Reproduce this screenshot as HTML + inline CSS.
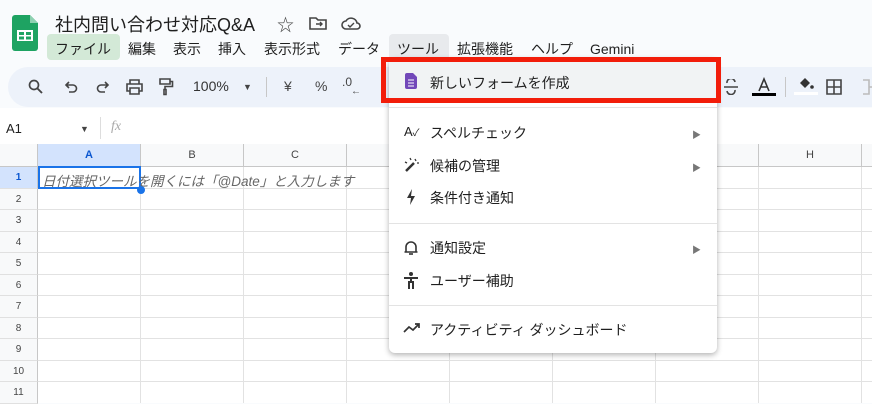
<!DOCTYPE html>
<html><head><meta charset="utf-8"><style>
*{box-sizing:border-box;margin:0;padding:0}
body{width:872px;height:403px;overflow:hidden;background:#f9fbfd;font-family:"Liberation Sans","Noto Sans CJK JP",sans-serif;color:#1f1f1f;position:relative}
.abs{position:absolute}
.menu span{position:absolute;top:38px;font-size:14px;height:22px;line-height:22px}
.tb{position:absolute;top:67px;left:8px;width:900px;height:40px;background:#edf2fa;border-radius:20px}
.tb span{position:absolute;top:11px;font-size:14px;color:#444}
.grid{position:absolute;top:144px;left:0;width:872px;height:259px;background:#fff}
.ch{position:absolute;top:0;height:23px;border-right:1px solid #c7c7c7;border-bottom:1px solid #c7c7c7;background:#f8f9fa;font-size:11px;color:#444;text-align:center;line-height:23px}
.rh{position:absolute;left:0;width:38px;border-right:1px solid #c7c7c7;border-bottom:1px solid #e0e0e0;background:#f8f9fa;font-size:10px;color:#444;text-align:center}
.hl{position:absolute;left:38px;width:834px;height:1px;background:#e2e2e2}
.vl{position:absolute;top:23px;width:1px;height:236px;background:#e2e2e2}
.dd{position:absolute;left:389px;top:58px;width:328px;height:295px;background:#fff;border-radius:6px;box-shadow:0 2px 6px rgba(0,0,0,.3)}
.it{position:absolute;left:430px;font-size:14px;color:#1f1f1f}
.sep{position:absolute;left:389px;width:328px;height:1px;background:#e3e3e3}
.arr{position:absolute;left:692px;font-size:9px;color:#777}
</style></head><body>
<svg class="abs" style="left:12px;top:15px" width="26" height="36" viewBox="0 0 26 36"><path d="M0 3a3 3 0 0 1 3-3h15l8 8v25a3 3 0 0 1-3 3H3a3 3 0 0 1-3-3z" fill="#1ea362"/><path d="M18 0v8h8z" fill="#8ed1b1"/><rect x="5" y="15" width="16" height="11" fill="#fff"/><rect x="7" y="17" width="5" height="3" fill="#1ea362"/><rect x="14" y="17" width="5" height="3" fill="#1ea362"/><rect x="7" y="21.5" width="5" height="3" fill="#1ea362"/><rect x="14" y="21.5" width="5" height="3" fill="#1ea362"/></svg>
<div class="abs" style="left:55px;top:11px;font-size:18px">社内問い合わせ対応Q&amp;A</div>
<div class="abs" style="left:277px;top:11px;font-size:17px;color:#444">☆</div>
<svg class="abs" style="left:309px;top:16px" width="18" height="14"><path d="M1 2h6l2 2h8v9H1z" fill="none" stroke="#444" stroke-width="1.6"/><path d="M7 8h6M11 6l2 2-2 2" fill="none" stroke="#444" stroke-width="1.4"/></svg>
<svg class="abs" style="left:341px;top:16px" width="20" height="14"><path d="M5 13a4 4 0 0 1 0-8 6 6 0 0 1 11 2 3 3 0 0 1 0 6z" fill="none" stroke="#444" stroke-width="1.6"/><path d="M7 9l2 2 4-4" fill="none" stroke="#444" stroke-width="1.4"/></svg>
<div class="abs" style="left:47px;top:34px;width:73px;height:26px;background:#d3e9d7;border-radius:4px"></div>
<div class="abs" style="left:389px;top:34px;width:60px;height:26px;background:#e8eaed;border-radius:4px 4px 0 0"></div>
<div class="menu"><span style="left:55px">ファイル</span><span style="left:128px">編集</span><span style="left:173px">表示</span><span style="left:218px">挿入</span><span style="left:264px">表示形式</span><span style="left:338px">データ</span><span style="left:397px">ツール</span><span style="left:457px">拡張機能</span><span style="left:531px">ヘルプ</span><span style="left:590px">Gemini</span></div>
<div class="tb">
<svg class="abs" style="left:20px;top:12px" width="16" height="16"><circle cx="6" cy="6" r="4.5" fill="none" stroke="#444" stroke-width="1.7"/><path d="M9.5 9.5L14 14" stroke="#444" stroke-width="1.9"/></svg>
<svg class="abs" style="left:56px;top:13px" width="14" height="14"><path d="M3 5h6a3.5 3.5 0 0 1 0 7H5M5 2L2 5l3 3" fill="none" stroke="#444" stroke-width="1.6"/></svg>
<svg class="abs" style="left:88px;top:13px" width="14" height="14"><path d="M11 5H5a3.5 3.5 0 0 0 0 7h4M9 2l3 3-3 3" fill="none" stroke="#444" stroke-width="1.6"/></svg>
<svg class="abs" style="left:118px;top:12px" width="17" height="16"><path d="M4 5V1h9v4M4 12H1V5h15v7h-3M4 9h9v6H4z" fill="none" stroke="#444" stroke-width="1.6"/></svg>
<svg class="abs" style="left:150px;top:11px" width="16" height="18"><path d="M2 1h10v5H2zM12 3.5h2.5v5H7v3M6 11.5h2v5H6z" fill="none" stroke="#444" stroke-width="1.6"/></svg>
<span style="left:185px;color:#333">100%</span><span style="left:235px;font-size:9px;top:15px">▼</span><div class="abs" style="left:258px;top:10px;width:1px;height:20px;background:#c7c7c7"></div><span style="left:276px">¥</span><span style="left:307px">%</span><span style="left:334px;font-size:12px;top:8px">.0</span><span style="left:343px;font-size:10px;top:19px">←</span>
<svg class="abs" style="left:716px;top:12px" width="14" height="16"><path d="M11 3a4 4 0 0 0-8 1M3 12a4 4 0 0 0 8-1M0 8h14" fill="none" stroke="#444" stroke-width="1.6"/></svg>
<svg class="abs" style="left:744px;top:10px" width="24" height="20"><path d="M7 14L12 2l5 12M9 10h6" fill="none" stroke="#333" stroke-width="1.6"/><rect x="0" y="16" width="24" height="3" fill="#000"/></svg>
<div class="abs" style="left:777px;top:10px;width:1px;height:20px;background:#c7c7c7"></div>
<svg class="abs" style="left:786px;top:9px" width="24" height="20"><path d="M6 7l5-5 5 5-5 5z" fill="#333"/><circle cx="18" cy="11" r="1.8" fill="#333"/><rect x="0" y="16" width="24" height="3" fill="#fff"/></svg>
<svg class="abs" style="left:818px;top:12px" width="16" height="16"><path d="M1 1h14v14H1zM8 1v14M1 8h14" fill="none" stroke="#444" stroke-width="1.6"/></svg>
<svg class="abs" style="left:854px;top:12px" width="16" height="16"><path d="M1 1h6v14H1M7 8h6" fill="none" stroke="#bbb" stroke-width="1.6"/></svg>
</div>
<div class="abs" style="left:0;top:108px;width:872px;height:36px;background:#fff"></div>
<div class="abs" style="left:6px;top:121px;font-size:13px">A1</div>
<div class="abs" style="left:80px;top:124px;font-size:9px;color:#444">▼</div>
<div class="abs" style="left:100px;top:117px;width:1px;height:22px;background:#ddd"></div>
<div class="abs" style="left:111px;top:119px;font-size:14px;color:#aaa;font-style:italic;font-family:'Liberation Serif',serif">fx</div>
<div class="grid">
<div class="ch" style="left:0;width:38px"></div>
<div class="ch" style="left:38px;width:103px;background:#d3e3fd;font-weight:bold;color:#0b57d0">A</div>
<div class="ch" style="left:141px;width:103px">B</div>
<div class="ch" style="left:244px;width:103px">C</div>
<div class="ch" style="left:347px;width:103px"></div>
<div class="ch" style="left:450px;width:103px"></div>
<div class="ch" style="left:553px;width:103px"></div>
<div class="ch" style="left:656px;width:103px"></div>
<div class="ch" style="left:759px;width:103px">H</div>
<div class="ch" style="left:862px;width:20px"></div>
<div class="vl" style="left:140px"></div><div class="vl" style="left:243px"></div><div class="vl" style="left:346px"></div><div class="vl" style="left:449px"></div><div class="vl" style="left:552px"></div><div class="vl" style="left:655px"></div><div class="vl" style="left:758px"></div><div class="vl" style="left:861px"></div>
<div class="rh" style="top:23px;height:22px;line-height:22px;background:#d3e3fd;font-weight:bold;color:#0b57d0">1</div>
<div class="rh" style="top:45px;height:21px;line-height:21px">2</div>
<div class="rh" style="top:66px;height:22px;line-height:22px">3</div>
<div class="rh" style="top:88px;height:21px;line-height:21px">4</div>
<div class="rh" style="top:109px;height:22px;line-height:22px">5</div>
<div class="rh" style="top:131px;height:21px;line-height:21px">6</div>
<div class="rh" style="top:152px;height:22px;line-height:22px">7</div>
<div class="rh" style="top:174px;height:21px;line-height:21px">8</div>
<div class="rh" style="top:195px;height:22px;line-height:22px">9</div>
<div class="rh" style="top:217px;height:21px;line-height:21px">10</div>
<div class="rh" style="top:238px;height:22px;line-height:22px">11</div>
<div class="hl" style="top:44px"></div><div class="hl" style="top:65px"></div><div class="hl" style="top:87px"></div><div class="hl" style="top:108px"></div><div class="hl" style="top:130px"></div><div class="hl" style="top:151px"></div><div class="hl" style="top:173px"></div><div class="hl" style="top:194px"></div><div class="hl" style="top:216px"></div><div class="hl" style="top:237px"></div>
<div class="abs" style="left:38px;top:22px;width:103px;height:23px;border:2px solid #1a73e8"></div>
<div class="abs" style="left:137px;top:42px;width:8px;height:8px;border-radius:50%;background:#1a73e8"></div>
<div class="abs" style="left:42px;top:26px;font-size:13.5px;font-style:italic;color:#666;white-space:nowrap">日付選択ツールを開くには「@Date」と入力します</div>
</div>
<div class="dd"></div>
<div class="abs" style="left:389px;top:62px;width:328px;height:37px;background:#f1f3f4"></div>
<div class="abs" style="left:381px;top:57px;width:340px;height:46px;border:5px solid #f21d0a"></div>
<svg class="abs" style="left:405px;top:73px" width="12" height="16"><path d="M0 2a2 2 0 0 1 2-2h6l4 4v10a2 2 0 0 1-2 2H2a2 2 0 0 1-2-2z" fill="#7248b9"/><path d="M3 7h6M3 10h6M3 13h6" stroke="#fff" stroke-width="1"/></svg>
<div class="it" style="top:73px">新しいフォームを作成</div>
<div class="sep" style="top:107px"></div>
<div class="abs" style="left:404px;top:124px;font-size:13px">A<span style="font-size:10px">✓</span></div>
<div class="it" style="top:123px">スペルチェック</div><div class="arr" style="top:128px">▶</div>
<svg class="abs" style="left:403px;top:157px" width="16" height="16"><path d="M3 14l8-8" stroke="#333" stroke-width="2.5"/><path d="M12 2l1 2M14 6l2 0M7 1l1 2M2 5l2 1" stroke="#333" stroke-width="1.3"/></svg>
<div class="it" style="top:156px">候補の管理</div><div class="arr" style="top:161px">▶</div>
<svg class="abs" style="left:406px;top:189px" width="10" height="16"><path d="M6 0L1 9h4l-1 7 5-9H5z" fill="#333"/></svg>
<div class="it" style="top:188px">条件付き通知</div>
<div class="sep" style="top:223px"></div>
<svg class="abs" style="left:404px;top:239px" width="14" height="17"><path d="M2 13V8a5 5 0 0 1 10 0v5h1.5H0.5z" fill="none" stroke="#333" stroke-width="1.6"/><path d="M5 15h4" stroke="#333" stroke-width="1.6"/></svg>
<div class="it" style="top:238px">通知設定</div><div class="arr" style="top:243px">▶</div>
<svg class="abs" style="left:404px;top:272px" width="14" height="17"><circle cx="7" cy="2" r="2" fill="#333"/><path d="M0 6h14M7 6v5M5 17v-7h4v7" stroke="#333" stroke-width="2" fill="none"/></svg>
<div class="it" style="top:271px">ユーザー補助</div>
<div class="sep" style="top:305px"></div>
<svg class="abs" style="left:403px;top:323px" width="17" height="10"><path d="M1 9l5-5 4 3 6-6M12 1h4v4" stroke="#333" stroke-width="1.7" fill="none"/></svg>
<div class="it" style="top:320px">アクティビティ ダッシュボード</div>
</body></html>
